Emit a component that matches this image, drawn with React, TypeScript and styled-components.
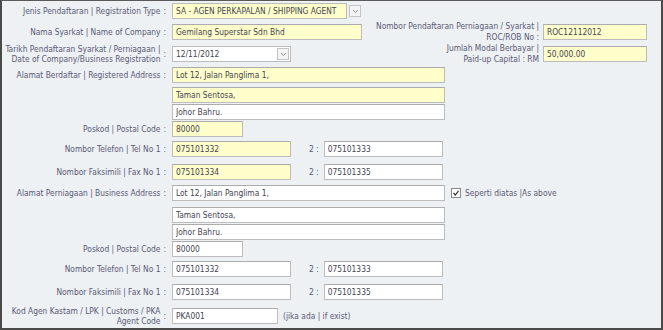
import React from 'react';
import styled, { createGlobalStyle } from 'styled-components';

const GlobalStyle = createGlobalStyle`
  body {
    margin: 0;
    background: #ffffff;
    font-family: "DejaVu Sans Condensed", "Liberation Sans", Arial, sans-serif;
  }
`;

const Frame = styled.div`
  width: 663px;
  height: 330px;
  box-sizing: border-box;
  background: #edf1f4;
  border: 2px solid #4a4a4a;
  border-top: 1px solid #5a5a5a;
  padding-top: 2px;
  font-size: 8.35px;
  color: #5a5a74;
  overflow: hidden;
`;

const Row = styled.div<{ $mt?: number }>`
  display: flex;
  align-items: center;
  height: 16px;
  margin-top: ${(p) => p.$mt ?? 0}px;
`;

const Label = styled.div`
  width: 166px;
  flex-shrink: 0;
  display: flex;
  justify-content: flex-end;
  align-items: center;
  text-align: right;
  line-height: 10px;
  padding-right: 2px;
  box-sizing: border-box;
  margin-right: 4px;
  white-space: nowrap;
`;

const Colon = styled.span`
  margin-left: 3px;
`;

const Input = styled.input<{ $w: number; $yellow?: boolean }>`
  width: ${(p) => p.$w}px;
  height: 16px;
  box-sizing: border-box;
  border: 1px solid #bcbcbc;
  border-top-color: #acacac;
  background: ${(p) => (p.$yellow ? '#ffffcc' : '#ffffff')};
  font-family: inherit;
  font-size: 8.35px;
  color: #444450;
  padding: 0 3px;
  margin: 0;
  outline: none;
`;

const Combo = styled.div<{ $w: number; $split?: boolean }>`
  width: ${(p) => p.$w}px;
  height: 16px;
  box-sizing: border-box;
  display: flex;
  align-items: center;
  gap: ${(p) => (p.$split ? 2 : 0)}px;
  background: ${(p) => (p.$split ? 'transparent' : '#ffffff')};
  border: ${(p) => (p.$split ? 'none' : '1px solid #bcbcbc')};
`;

const ComboText = styled.div<{ $yellow?: boolean; $split?: boolean }>`
  flex: 1;
  height: 100%;
  box-sizing: border-box;
  display: flex;
  align-items: center;
  padding: 0 3px;
  color: #444450;
  white-space: nowrap;
  overflow: hidden;
  background: ${(p) => (p.$yellow ? '#ffffcc' : 'transparent')};
  border: ${(p) => (p.$split ? '1px solid #bcbcbc' : 'none')};
`;

const ArrowBtn = styled.div`
  width: 12px;
  height: 12px;
  margin-right: 1px;
  box-sizing: border-box;
  border: 1px solid #c4c4c4;
  background: #f4f4f4;
  display: flex;
  align-items: center;
  justify-content: center;
`;

const RightGroup = styled.div`
  margin-left: auto;
  padding-right: 14px;
  display: flex;
  align-items: center;
`;

const RightLabel = styled.div`
  text-align: right;
  line-height: 11px;
  margin-right: 4px;
  white-space: nowrap;
`;

const Sep = styled.span`
  margin: 0 5px 0 18px;
`;

const Note = styled.span`
  margin-left: 5px;
`;

const CheckLabel = styled.label`
  display: flex;
  align-items: center;
  margin-left: 6px;
  gap: 4px;
`;

const Box = styled.span`
  width: 10px;
  height: 10px;
  box-sizing: border-box;
  border: 1px solid #8a8a8a;
  background: #ffffff;
  display: flex;
  align-items: center;
  justify-content: center;
`;

const Chevron = () => (
  <svg width="7" height="5" viewBox="0 0 7 5">
    <path d="M1 1 L3.5 3.5 L6 1" fill="none" stroke="#8a8a9a" strokeWidth="1" />
  </svg>
);

const Tick = () => (
  <svg width="8" height="8" viewBox="0 0 8 8">
    <path d="M1.5 4 L3.3 6 L6.5 1.8" fill="none" stroke="#333" strokeWidth="1.2" />
  </svg>
);

const FieldLabel: React.FC<{ children?: React.ReactNode }> = ({ children }) => (
  <Label>
    {children ? (
      <>
        <span>{children}</span>
        <Colon>:</Colon>
      </>
    ) : null}
  </Label>
);

interface AddressBlock {
  lines: string[];
  postcode: string;
  tel: [string, string];
  fax: [string, string];
  yellow?: boolean;
}

const registered: AddressBlock = {
  lines: ['Lot 12, Jalan Panglima 1,', 'Taman Sentosa,', 'Johor Bahru.'],
  postcode: '80000',
  tel: ['075101332', '075101333'],
  fax: ['075101334', '075101335'],
  yellow: true,
};

const business: AddressBlock = {
  lines: ['Lot 12, Jalan Panglima 1,', 'Taman Sentosa,', 'Johor Bahru.'],
  postcode: '80000',
  tel: ['075101332', '075101333'],
  fax: ['075101334', '075101335'],
};

const App: React.FC = () => {
  const y = registered.yellow;
  return (
    <>
      <GlobalStyle />
      <Frame>
        <Row>
          <FieldLabel>Jenis Pendaftaran | Registration Type</FieldLabel>
          <Combo $w={190} $split>
            <ComboText $yellow $split>SA - AGEN PERKAPALAN / SHIPPING AGENT</ComboText>
            <ArrowBtn>
              <Chevron />
            </ArrowBtn>
          </Combo>
        </Row>

        <Row $mt={5}>
          <FieldLabel>Nama Syarkat | Name of Company</FieldLabel>
          <Input $w={190} $yellow readOnly value="Gemilang Superstar Sdn Bhd" />
          <RightGroup>
            <RightLabel>
              Nombor Pendaftaran Perniagaan / Syarkat |<br />
              ROC/ROB No :
            </RightLabel>
            <Input $w={104} $yellow readOnly value="ROC12112012" />
          </RightGroup>
        </Row>

        <Row $mt={6}>
          <FieldLabel>
            Tarikh Pendaftaran Syarkat / Perniagaan |<br />
            Date of Company/Business Registration
          </FieldLabel>
          <Combo $w={119}>
            <ComboText>12/11/2012</ComboText>
            <ArrowBtn>
              <Chevron />
            </ArrowBtn>
          </Combo>
          <RightGroup>
            <RightLabel>
              Jumlah Modal Berbayar |<br />
              Paid-up Capital : RM
            </RightLabel>
            <Input $w={104} $yellow readOnly value="50,000.00" />
          </RightGroup>
        </Row>

        <Row $mt={5}>
          <FieldLabel>Alamat Berdaftar | Registered Address</FieldLabel>
          <Input $w={273} $yellow={y} readOnly value={registered.lines[0]} />
        </Row>
        <Row $mt={4}>
          <FieldLabel />
          <Input $w={273} $yellow={y} readOnly value={registered.lines[1]} />
        </Row>
        <Row $mt={1}>
          <FieldLabel />
          <Input $w={273} readOnly value={registered.lines[2]} />
        </Row>
        <Row $mt={1}>
          <FieldLabel>Poskod | Postal Code</FieldLabel>
          <Input $w={71} $yellow={y} readOnly value={registered.postcode} />
        </Row>
        <Row $mt={4}>
          <FieldLabel>Nombor Telefon | Tel No 1</FieldLabel>
          <Input $w={119} $yellow={y} readOnly value={registered.tel[0]} />
          <Sep>2 :</Sep>
          <Input $w={119} readOnly value={registered.tel[1]} />
        </Row>
        <Row $mt={7}>
          <FieldLabel>Nombor Faksimili | Fax No 1</FieldLabel>
          <Input $w={119} $yellow={y} readOnly value={registered.fax[0]} />
          <Sep>2 :</Sep>
          <Input $w={119} readOnly value={registered.fax[1]} />
        </Row>

        <Row $mt={5}>
          <FieldLabel>Alamat Perniagaan | Business Address</FieldLabel>
          <Input $w={273} readOnly value={business.lines[0]} />
          <CheckLabel>
            <Box>
              <Tick />
            </Box>
            Seperti diatas |As above
          </CheckLabel>
        </Row>
        <Row $mt={6}>
          <FieldLabel />
          <Input $w={273} readOnly value={business.lines[1]} />
        </Row>
        <Row $mt={1}>
          <FieldLabel />
          <Input $w={273} readOnly value={business.lines[2]} />
        </Row>
        <Row $mt={1}>
          <FieldLabel>Poskod | Postal Code</FieldLabel>
          <Input $w={71} readOnly value={business.postcode} />
        </Row>
        <Row $mt={4}>
          <FieldLabel>Nombor Telefon | Tel No 1</FieldLabel>
          <Input $w={119} readOnly value={business.tel[0]} />
          <Sep>2 :</Sep>
          <Input $w={119} readOnly value={business.tel[1]} />
        </Row>
        <Row $mt={7}>
          <FieldLabel>Nombor Faksimili | Fax No 1</FieldLabel>
          <Input $w={119} readOnly value={business.fax[0]} />
          <Sep>2 :</Sep>
          <Input $w={119} readOnly value={business.fax[1]} />
        </Row>

        <Row $mt={8}>
          <FieldLabel>
            Kod Agen Kastam / LPK | Customs / PKA<br />
            Agent Code
          </FieldLabel>
          <Input $w={106} readOnly value="PKA001" />
          <Note>(jika ada | if exist)</Note>
        </Row>
      </Frame>
    </>
  );
};

export default App;
